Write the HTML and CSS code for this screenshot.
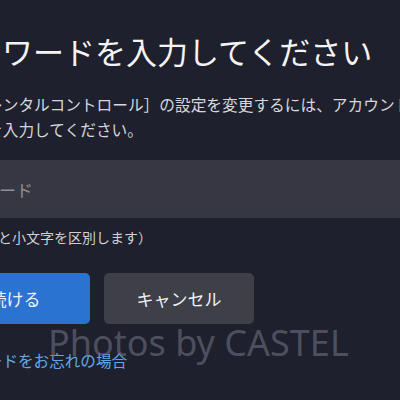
FILE: index.html
```html
<!DOCTYPE html>
<html lang="ja">
<head>
<meta charset="utf-8">
<link rel="stylesheet" href="styles.css">
</head>
<body>
<div class="screen">
  <div class="dialog">
    <h1 class="title">パスワードを入力してください</h1>
    <p class="desc">［ペアレンタルコントロール］の設定を変更するには、アカウントのパス<br>ワードを入力してください。</p>
    <div class="field"><span class="placeholder">パスワード</span></div>
    <p class="hint">（大文字と小文字を区別します）</p>
    <div class="actions">
      <button class="btn btn-primary">続ける</button>
      <button class="btn btn-secondary">キャンセル</button>
    </div>
    <a class="link" href="#">パスワードをお忘れの場合</a>
  </div>
  <div class="watermark">Photos by CASTEL</div>
</div>
</body>
</html>
```

FILE: styles.css
```css
html, body {
  margin: 0;
  padding: 0;
  background: #1f202d;
}
body {
  width: 400px;
  height: 400px;
  overflow: hidden;
  font-family: "Noto Sans CJK JP", "Noto Sans", sans-serif;
}
.screen {
  position: relative;
  width: 400px;
  height: 400px;
  overflow: hidden;
}
.dialog {
  display: flex;
  flex-direction: column;
  align-items: flex-start;
  width: 620px;
  margin-left: -60px;
  padding-top: 31px;
}
.title {
  margin: 0;
  font-size: 31px;
  line-height: 40px;
  font-weight: 400;
  color: #f4f4f6;
  white-space: nowrap;
}
.desc {
  margin: 21px 0 0;
  font-size: 15.7px;
  line-height: 25px;
  color: #d6d7dc;
  white-space: nowrap;
}
.field {
  align-self: stretch;
  margin-top: 18px;
  height: 58px;
  background: #363743;
  display: flex;
  align-items: center;
  padding-left: 8px;
}
.placeholder {
  font-size: 17px;
  color: #8e8f97;
}
.hint {
  margin: 8px 0 0 2px;
  font-size: 14px;
  line-height: 22px;
  color: #d0d1d6;
  white-space: nowrap;
}
.actions {
  display: flex;
  gap: 14px;
  margin-top: 25px;
}
.btn {
  width: 150px;
  height: 51px;
  border: none;
  border-radius: 5px;
  font-family: "Noto Sans CJK JP", sans-serif;
  font-size: 17px;
  color: #f2f3f6;
  padding: 0;
}
.btn-primary {
  background: #2b73d1;
}
.btn-secondary {
  background: #3e3f47;
}
.link {
  margin-top: 25px;
  font-size: 15.6px;
  line-height: 22px;
  color: #5fa9ea;
  text-decoration: none;
  white-space: nowrap;
}
.watermark {
  position: absolute;
  left: 48px;
  top: 318px;
  font-family: "Noto Sans", sans-serif;
  font-size: 36px;
  line-height: 50px;
  color: rgba(110, 112, 128, 0.6);
  white-space: nowrap;
  pointer-events: none;
}
```
